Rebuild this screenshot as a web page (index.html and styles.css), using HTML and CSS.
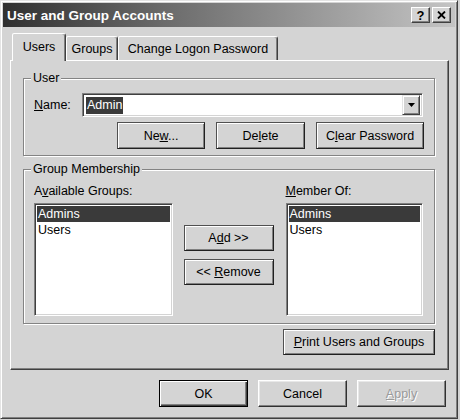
FILE: index.html
```html
<!DOCTYPE html>
<html>
<head>
<meta charset="utf-8">
<title>User and Group Accounts</title>
<link rel="stylesheet" href="styles.css">
</head>
<body>
<div class="window">
  <div class="titlebar">
    <span class="title">User and Group Accounts</span>
    <div class="tb-btns">
      <span class="tb-btn help">?</span>
      <span class="tb-btn close"><svg width="9" height="8" viewBox="0 0 9 8"><path d="M1 0.5 L8 7.5 M8 0.5 L1 7.5" stroke="#000" stroke-width="1.8" fill="none"/></svg></span>
    </div>
  </div>
  <div class="content">
    <div class="tabs">
      <div class="tab selected t1">Users</div>
      <div class="tab t2">Groups</div>
      <div class="tab t3">Change Logon Password</div>
    </div>
    <div class="panel">
      <fieldset class="group user-group">
        <legend>User</legend>
        <div class="name-row">
          <label class="name-label"><u>N</u>ame:</label>
          <div class="combo">
            <span class="combo-text"><span class="sel-text">Admin</span></span>
            <span class="combo-btn"><svg width="7" height="4" viewBox="0 0 7 4"><path d="M0 0 H7 L3.5 4 Z" fill="#000"/></svg></span>
          </div>
        </div>
        <div class="btn-row">
          <button class="btn dark w-new"><span>Ne<u>w</u>...</span></button>
          <button class="btn dark w-del"><span>De<u>l</u>ete</span></button>
          <button class="btn dark w-clr"><span>C<u>l</u>ear Password</span></button>
        </div>
      </fieldset>
      <fieldset class="group member-group">
        <legend>Group Membership</legend>
        <div class="cols">
          <div class="col list-col left">
            <div class="col-label">A<u>v</u>ailable Groups:</div>
            <div class="listbox">
              <div class="item selected">Admins</div>
              <div class="item">Users</div>
            </div>
          </div>
          <div class="col mid">
            <button class="btn dark w-mid"><span>A<u>d</u>d &gt;&gt;</span></button>
            <button class="btn dark w-mid"><span>&lt;&lt; <u>R</u>emove</span></button>
          </div>
          <div class="col list-col right">
            <div class="col-label"><u>M</u>ember Of:</div>
            <div class="listbox">
              <div class="item selected">Admins</div>
              <div class="item">Users</div>
            </div>
          </div>
        </div>
      </fieldset>
      <div class="print-row">
        <button class="btn dark w-print"><span><u>P</u>rint Users and Groups</span></button>
      </div>
    </div>
    <div class="footer">
      <button class="btn default w-foot"><span>OK</span></button>
      <button class="btn w-foot"><span>Cancel</span></button>
      <button class="btn w-foot disabled"><span><u>A</u>pply</span></button>
    </div>
  </div>
</div>
</body>
</html>
```
FILE: styles.css
```css
* { box-sizing: border-box; }

html, body {
  margin: 0;
  padding: 0;
}

body {
  width: 460px;
  height: 420px;
  background: #d4d4d4;
  font-family: "Liberation Sans", Arial, sans-serif;
  font-size: 12.5px;
  color: #000;
  overflow: hidden;
}

.window {
  width: 458px;
  height: 419px;
  border: 1px solid;
  border-color: #e4e4e4 #404040 #404040 #e4e4e4;
  box-shadow: inset 1px 1px #fff, inset -1px -1px #808080;
  padding: 2px;
  display: flex;
  flex-direction: column;
  background: #d4d4d4;
}

.titlebar {
  height: 24px;
  flex: none;
  display: flex;
  align-items: center;
  padding: 0 4px 0 4px;
  background: linear-gradient(to right, #303030 0%, #6a6a6a 35%, #c4c4c4 100%);
  color: #fff;
}

.title {
  font-weight: bold;
  font-size: 13.5px;
}

.tb-btns {
  margin-left: auto;
  display: flex;
  gap: 2px;
}

.tb-btn {
  width: 19px;
  height: 16px;
  background: #d4d4d4;
  border: 1px solid;
  border-color: #fff #404040 #404040 #fff;
  box-shadow: inset -1px -1px #808080;
  display: flex;
  align-items: center;
  justify-content: center;
  color: #000;
  font-weight: bold;
  font-size: 13px;
  line-height: 1;
}

.content {
  flex: 1;
  display: flex;
  flex-direction: column;
  padding: 6px 6px 0 7px;
}

.tabs {
  height: 27px;
  display: flex;
  align-items: flex-end;
  padding-left: 2px;
  position: relative;
  z-index: 1;
}

.tab {
  height: 24px;
  border: 1px solid;
  border-bottom: none;
  border-color: #fff #404040 transparent #fff;
  box-shadow: inset -1px 0 #808080;
  border-radius: 2px 3px 0 0;
  display: flex;
  align-items: center;
  justify-content: center;
  background: #d4d4d4;
  padding-top: 1px;
}

.tab.selected {
  height: 28px;
  margin-bottom: -1px;
  padding-bottom: 2px;
}

.t1 { width: 54px; }
.t2 { width: 52px; }
.t3 { width: 160px; }

.panel {
  height: 310px;
  flex: none;
  border: 1px solid;
  border-color: #fff #404040 #404040 #fff;
  box-shadow: inset -1px -1px #808080;
  padding: 10px 13px 0 12px;
  display: flex;
  flex-direction: column;
}

.group {
  margin: 0;
  border: 1px solid #848484;
  box-shadow: inset 1px 1px #fff, 1px 1px #fff;
  min-width: 0;
}

.group legend {
  padding: 0 2px;
  margin-left: -3px;
  line-height: 15px;
  background: #d4d4d4;
}

.user-group {
  padding: 7px 11px 6px 10px;
}

.name-row {
  display: flex;
  align-items: center;
  height: 24px;
}

.name-label {
  width: 48px;
}

.combo {
  flex: 1;
  height: 24px;
  background: #fff;
  border: 1px solid;
  border-color: #808080 #fff #fff #808080;
  box-shadow: inset 1px 1px #404040, inset -1px -1px #d4d4d4;
  display: flex;
  align-items: center;
  padding: 2px;
}

.combo-text {
  flex: 1;
  padding-left: 1px;
}

.sel-text {
  background: #3a3a3a;
  color: #fff;
  padding: 1px 1px 2px 1px;
}

.combo-btn {
  width: 18px;
  height: 20px;
  background: #d4d4d4;
  border: 1px solid;
  border-color: #e4e4e4 #404040 #404040 #e4e4e4;
  box-shadow: inset 1px 1px #fff, inset -1px -1px #808080;
  display: flex;
  align-items: center;
  justify-content: center;
}

.btn-row {
  margin-top: 5px;
  display: flex;
  justify-content: flex-end;
  gap: 11px;
  margin-right: -1px;
}

.btn {
  font-family: inherit;
  font-size: 12.5px;
  height: 27px;
  padding: 0;
  background: #d4d4d4;
  color: #000;
  border: 1px solid;
  border-color: #fff #303030 #303030 #fff;
  box-shadow: inset -1px -1px #808080, inset 1px 1px #e8e8e8;
  display: flex;
  align-items: center;
  justify-content: center;
  white-space: pre;
}

.btn.dark {
  border-color: #505050 #202020 #202020 #505050;
  box-shadow: inset 1px 1px #fff, inset -1px -1px #808080;
}

.btn.default {
  border: 1px solid #000;
  box-shadow: inset 1px 1px #fff, inset -1px -1px #404040, inset -2px -2px #808080;
}

.btn.disabled {
  color: #9a9a9a;
  text-shadow: 1px 1px #fff;
}

.w-new { width: 88px; }
.w-del { width: 89px; }
.w-clr { width: 108px; }
.w-mid { width: 90px; height: 26px; }
.w-print { width: 152px; height: 26px; }
.w-foot { width: 89px; }

.member-group {
  margin-top: 6px;
  padding: 7px 11px 7px 10px;
}

.cols {
  display: flex;
  gap: 11px;
}

.list-col {
  display: flex;
  flex-direction: column;
}

.list-col.left { width: 139px; }
.list-col.right { width: 138px; margin-left: 1px; }

.col-label {
  line-height: 15px;
  height: 15px;
  margin-bottom: 4px;
}

.listbox {
  height: 113px;
  background: #fff;
  border: 1px solid;
  border-color: #808080 #fff #fff #808080;
  box-shadow: inset 1px 1px #404040, inset -1px -1px #d4d4d4;
  padding: 2px;
}

.item {
  height: 16px;
  line-height: 16px;
  padding-left: 1px;
}

.item.selected {
  background: #3a3a3a;
  color: #fff;
}

.mid {
  width: 90px;
  display: flex;
  flex-direction: column;
  gap: 8px;
  padding-top: 41px;
}

.print-row {
  display: flex;
  justify-content: flex-end;
  margin-top: 5px;
}

.footer {
  display: flex;
  justify-content: flex-end;
  gap: 10px;
  padding-top: 10px;
  padding-right: 3px;
}
```
